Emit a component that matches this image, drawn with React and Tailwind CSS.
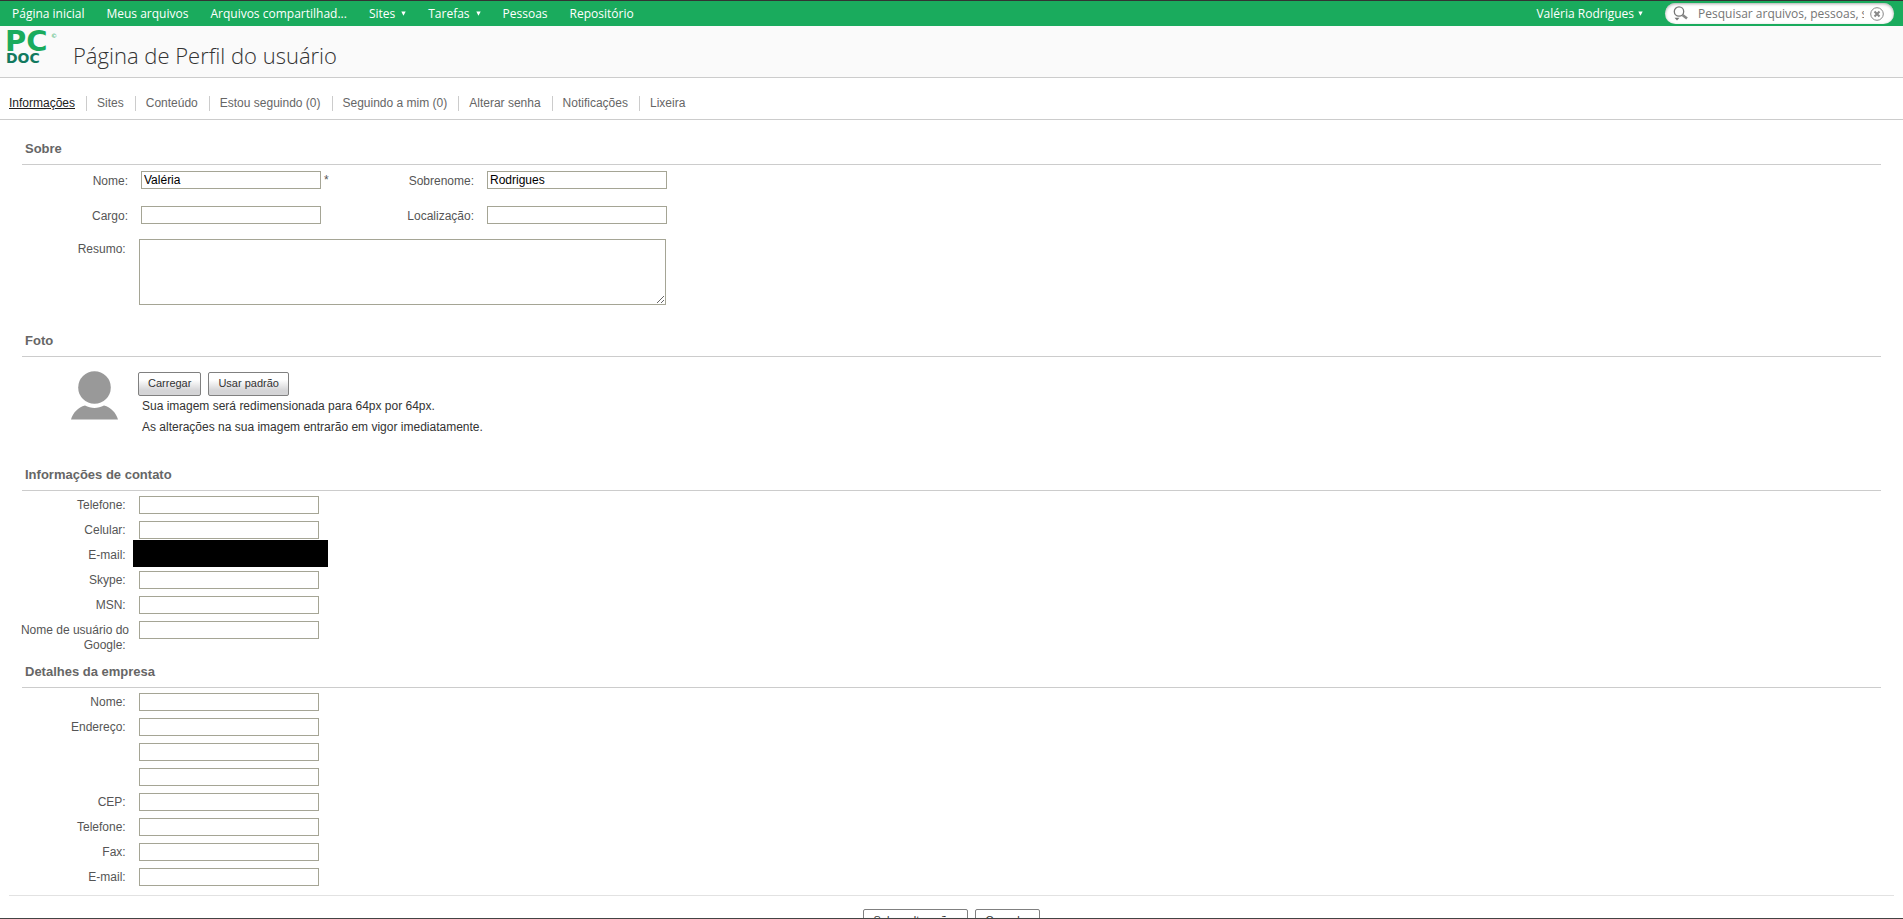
import React from "react";

const NAV_ITEMS = [
  { label: "Página inicial" },
  { label: "Meus arquivos" },
  { label: "Arquivos compartilhad..." },
  { label: "Sites", menu: true },
  { label: "Tarefas", menu: true },
  { label: "Pessoas" },
  { label: "Repositório" },
];

const TABS = [
  "Informações",
  "Sites",
  "Conteúdo",
  "Estou seguindo (0)",
  "Seguindo a mim (0)",
  "Alterar senha",
  "Notificações",
  "Lixeira",
];

const CONTACT_FIELDS = [
  { id: "telephone", label: "Telefone:" },
  { id: "mobile", label: "Celular:" },
  { id: "email", label: "E-mail:", hidden: true },
  { id: "skype", label: "Skype:" },
  { id: "msn", label: "MSN:" },
  { id: "google", label: "Nome de usuário do\nGoogle:" },
];

const COMPANY_FIELDS = [
  { id: "company-name", label: "Nome:" },
  { id: "company-address1", label: "Endereço:" },
  { id: "company-address2", aria: "Endereço 2" },
  { id: "company-address3", aria: "Endereço 3" },
  { id: "company-postcode", label: "CEP:" },
  { id: "company-telephone", label: "Telefone:" },
  { id: "company-fax", label: "Fax:" },
  { id: "company-email", label: "E-mail:" },
];

const inputClass =
  "block h-[18px] w-[180px] border border-[#a5a595] bg-white px-0.5 text-xs text-black outline-none";

function Caret() {
  return (
    <svg width="5" height="5" viewBox="0 0 5 5" fill="currentColor" aria-hidden="true">
      <path d="M0.300 0.500h4.400L2.500 4.700z" />
    </svg>
  );
}

function Logo() {
  return (
    <svg
      className="shrink-0 overflow-visible"
      width="54"
      height="32"
      viewBox="0 0 54 32"
      fontFamily="'DejaVu Sans', sans-serif"
      fontWeight="bold"
      role="img"
      aria-label="PC DOC"
    >
      <text x="-2" y="18" fontSize="29" fill="#1aab5d">PC</text>
      <text x="-1" y="30" fontSize="14" fill="#12795f">DOC</text>
      <text x="44" y="5" fontSize="6" fontWeight="normal" fill="#1aab5d">©</text>
    </svg>
  );
}

function TopBar() {
  return (
    <div className="flex h-[26px] shrink-0 items-center justify-between border-t border-[#333] bg-[#1aab5d] pl-3 pr-[9px] font-['Open_Sans',sans-serif] text-xs text-white">
      <nav className="flex gap-[22px]">
        {NAV_ITEMS.map((item) => (
          <a key={item.label} href="#" className="flex items-center gap-1.5">
            {item.label}
            {item.menu && <Caret />}
          </a>
        ))}
      </nav>
      <div className="flex items-center gap-[22px]">
        <a href="#" className="flex items-center gap-1">
          Valéria Rodrigues
          <Caret />
        </a>
        <div className="flex h-[21px] w-[229px] items-center rounded-full bg-white pl-2 pr-[10px] shadow-[inset_0_1px_3px_#aaa]">
          <svg width="15" height="15" viewBox="0 0 15 15" fill="none" stroke="#777" aria-hidden="true">
            <circle cx="6" cy="5.5" r="4.7" strokeWidth="1.3" />
            <path d="M9.500 9l4.500 3.600" strokeWidth="2.6" stroke="#888" />
            <path d="M1.500 11.800h5L4 14.500z" fill="#777" stroke="none" />
          </svg>
          <input
            type="text"
            aria-label="Pesquisar"
            placeholder="Pesquisar arquivos, pessoas, sites"
            className="ml-2.5 h-5 w-[166px] bg-transparent text-xs text-[#333] outline-none placeholder:text-[#757575]"
          />
          <button type="button" aria-label="Limpar" className="ml-auto">
            <svg width="14" height="14" viewBox="0 0 14 14" fill="none" stroke="#888">
              <circle cx="7" cy="7" r="6.3" strokeWidth="1" />
              <path d="M4.500 4.500l5 5m0-5l-5 5" strokeWidth="2" />
            </svg>
          </button>
        </div>
      </div>
    </div>
  );
}

function Section({ title, children }) {
  return (
    <section className="px-5">
      <h2 className="mx-0.5 border-b border-[#ccc] px-[3px] pb-[5px] text-[13px] font-bold leading-5 text-[#666]">
        {title}
      </h2>
      {children}
    </section>
  );
}

function FieldRow({ field }) {
  return (
    <div className="flex min-h-[25px] gap-2.5">
      {field.label ? (
        <label
          htmlFor={field.id}
          className="w-[109px] shrink-0 whitespace-pre pt-0.5 text-right leading-[15px]"
        >
          {field.label}&nbsp;
        </label>
      ) : (
        <span className="w-[109px] shrink-0" />
      )}
      <div className="relative">
        <input id={field.id} type="text" aria-label={field.aria} className={inputClass} />
        {field.hidden && (
          <span className="absolute -left-1.5 -top-1.5 h-[27px] w-[195px] bg-black" />
        )}
      </div>
    </div>
  );
}

function Button({ children }) {
  return (
    <button
      type="button"
      className="h-6 rounded-xs border border-[#808080] bg-linear-to-b from-white from-30% to-[#d4d4d6] to-80% px-[9px] pb-0.5 text-[11px] text-[#333]"
    >
      {children}
    </button>
  );
}

function AboutField({ id, label, value, required, className }) {
  return (
    <div className="flex h-[18px] items-center">
      <label htmlFor={id} className={className}>
        {label}
      </label>
      <input id={id} type="text" defaultValue={value} className={inputClass} />
      <span className="w-[26px] pl-[3px]">{required && "*"}</span>
    </div>
  );
}

export default function App() {
  return (
    <div className="flex h-screen flex-col overflow-hidden border-b border-[#444] bg-white font-['Liberation_Sans',Arial,sans-serif] text-xs text-[#555]">
      <TopBar />

      <header className="flex h-[52px] shrink-0 gap-3 border-b border-[#ccc] bg-[#fafafa] pl-[7px] pt-[7px]">
        <Logo />
        <h1 className="pt-1.5 font-['Open_Sans',sans-serif] text-[22px] font-light leading-8 text-[#333]">
          Página de Perfil do usuário
        </h1>
      </header>

      <nav className="flex h-[42px] shrink-0 items-center border-b border-[#ccc] pl-[9px] pt-[9px]">
        {TABS.map((tab, i) => (
          <a
            key={tab}
            href="#"
            className={
              i === 0
                ? "pr-[11px] leading-[15px] text-[#222] underline"
                : "border-l border-[#ccc] pl-2.5 pr-[11px] leading-[15px] text-[#666]"
            }
          >
            {tab}
          </a>
        ))}
      </nav>

      <form className="min-h-0 flex-1 overflow-hidden pt-[19px]">
        <Section title="Sobre">
          <div className="flex flex-col gap-[17px] pt-1.5">
            <div className="flex">
              <AboutField
                id="first-name"
                label="Nome:"
                value="Valéria"
                required
                className="w-[121px] pr-[13px] pt-0.5 text-right"
              />
              <AboutField
                id="last-name"
                label="Sobrenome:"
                value="Rodrigues"
                className="w-[140px] pr-[13px] pt-0.5 text-right"
              />
            </div>
            <div className="flex">
              <AboutField
                id="job"
                label="Cargo:"
                className="w-[121px] pr-[13px] pt-0.5 text-right"
              />
              <AboutField
                id="location"
                label="Localização:"
                className="w-[140px] pr-[13px] pt-0.5 text-right"
              />
            </div>
          </div>
          <div className="flex gap-2.5 pb-[26px] pt-[15px]">
            <label htmlFor="biography" className="w-[109px] pt-[3px] text-right leading-[15px]">
              Resumo:&nbsp;
            </label>
            <textarea
              id="biography"
              className="block h-[66px] w-[527px] resize border border-[#a5a595] bg-white p-0.5 outline-none"
            />
          </div>
        </Section>

        <Section title="Foto">
          <div className="flex gap-5 pb-[27px] pl-[51px] pt-[14px]">
            <svg width="47" height="49" viewBox="0 0 47 49" fill="#999" aria-hidden="true">
              <circle cx="23.5" cy="16.5" r="16.3" />
              <path d="M0 48.500C2 42 7 36 14 34.500c6 3.200 13 3.200 19 0C40 36 45 42 47 48.500z" />
            </svg>
            <div className="pt-px">
              <div className="flex gap-[7px]">
                <Button>Carregar</Button>
                <Button>Usar padrão</Button>
              </div>
              <p className="pl-1 leading-[21px] text-[#333]">
                Sua imagem será redimensionada para 64px por 64px.
              </p>
              <p className="pl-1 leading-[21px] text-[#333]">
                As alterações na sua imagem entrarão em vigor imediatamente.
              </p>
            </div>
          </div>
        </Section>

        <Section title="Informações de contato">
          <div className="pb-[9px] pt-[5px]">
            {CONTACT_FIELDS.map((field) => (
              <FieldRow key={field.id} field={field} />
            ))}
          </div>
        </Section>

        <Section title="Detalhes da empresa">
          <div className="pb-0.5 pt-[5px]">
            {COMPANY_FIELDS.map((field) => (
              <FieldRow key={field.id} field={field} />
            ))}
          </div>
        </Section>

        <div className="mx-[9px] flex justify-center gap-[7px] border-t border-[#e2e2e2] pt-[13px]">
          <Button>Salvar alterações</Button>
          <Button>Cancelar</Button>
        </div>
      </form>
    </div>
  );
}
